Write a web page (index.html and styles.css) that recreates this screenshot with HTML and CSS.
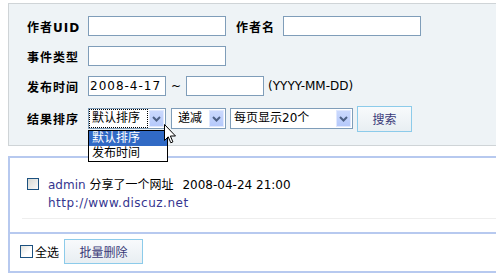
FILE: index.html
```html
<!DOCTYPE html>
<html lang="zh-CN">
<head>
    <meta charset="UTF-8">
    <meta name="viewport" content="width=device-width, initial-scale=1.0">
    <title>事件搜索</title>
    <link rel="stylesheet" href="styles.css">
</head>
<body>

    <!-- 搜索表单 -->
    <div class="search-box">
        <div class="form-row">
            <label class="field-label">作者UID</label>
            <input type="text" class="txt">
            <label class="field-label field-label-inline">作者名</label>
            <input type="text" class="txt">
        </div>
        <div class="form-row">
            <label class="field-label">事件类型</label>
            <input type="text" class="txt">
        </div>
        <div class="form-row">
            <label class="field-label">发布时间</label>
            <input type="text" class="txt txt-date txt-filled" value="2008-4-17">
            <span class="tilde">~</span>
            <input type="text" class="txt txt-date">
            <span class="hint">(YYYY-MM-DD)</span>
        </div>
        <div class="form-row form-row-last">
            <label class="field-label">结果排序</label>

            <div class="combo combo-order">
                <span class="combo-text combo-text-focus">默认排序</span>
                <span class="combo-arrow">
                    <svg width="9" height="6" viewBox="0 0 9 6"><path d="M1 1 L4.5 4.5 L8 1" fill="none" stroke="#4d6185" stroke-width="2"/></svg>
                </span>
                <ul class="combo-list">
                    <li class="active">默认排序</li>
                    <li>发布时间</li>
                </ul>
                <svg class="cursor" width="12" height="20" viewBox="0 0 12 20">
                    <path d="M0.5 0.5 V16.5 L4.2 12.8 L6.8 18.8 L8.9 17.9 L6.4 12 H11.5 Z" fill="#fff" stroke="#000"/>
                </svg>
            </div>

            <div class="combo combo-dir">
                <span class="combo-text">递减</span>
                <span class="combo-arrow">
                    <svg width="9" height="6" viewBox="0 0 9 6"><path d="M1 1 L4.5 4.5 L8 1" fill="none" stroke="#4d6185" stroke-width="2"/></svg>
                </span>
            </div>

            <div class="combo combo-perpage">
                <span class="combo-text">每页显示20个</span>
                <span class="combo-arrow">
                    <svg width="9" height="6" viewBox="0 0 9 6"><path d="M1 1 L4.5 4.5 L8 1" fill="none" stroke="#4d6185" stroke-width="2"/></svg>
                </span>
            </div>

            <button class="btn">搜索</button>
        </div>
    </div>

    <!-- 动态列表 -->
    <div class="feed-box">
        <div class="feed-list">
            <div class="feed-item">
                <span class="check"></span>
                <div class="feed-body">
                    <div><a href="#">admin</a> 分享了一个网址<span class="feed-time">2008-04-24 21:00</span></div>
                    <div><a href="#" class="feed-url">http://www.discuz.net</a></div>
                </div>
            </div>
        </div>
        <div class="feed-foot">
            <span class="check check-lg"></span>
            <span class="select-all">全选</span>
            <button class="btn btn-wide">批量删除</button>
        </div>
    </div>

</body>
</html>
```

FILE: styles.css
```css
/* Umum */
* {
    margin: 0;
    padding: 0;
    box-sizing: border-box;
}

html, body {
    overflow: hidden;
}

body {
    margin: 3px 0 0 8px;
    background: #fff;
    color: #000;
    font: 12px "DejaVu Sans", "Noto Sans CJK SC", sans-serif;
}

/* Search box */
.search-box {
    margin-right: -30px;
    padding: 7px 0 9px 18px;
    background: #eef3f6;
    border: 1px solid #cfd4d7;
    border-right: 0;
}

.form-row {
    display: flex;
    align-items: center;
    height: 30px;
}

.form-row-last {
    height: 35px;
}

.field-label {
    width: 61px;
    font-weight: bold;
    letter-spacing: 1px;
    white-space: nowrap;
}

.field-label-inline {
    width: auto;
    margin: 0 8px 0 10px;
}

.txt {
    width: 138px;
    height: 20px;
    padding: 0 1px;
    border: 1px solid #7f9db9;
    background: #fff;
    font: 12px "DejaVu Sans", sans-serif;
    color: #000;
    outline: none;
}

.txt-date {
    width: 78px;
}

.txt-filled {
    letter-spacing: 1px;
}

.tilde {
    margin: 0 5px;
}

.hint {
    margin-left: 4px;
}

/* Combo (select) */
.combo {
    position: relative;
    display: flex;
    align-items: center;
    height: 21px;
    margin-right: 4px;
    border: 1px solid #7f9db9;
    background: #fff;
    white-space: nowrap;
}

.combo-order {
    width: 78px;
    margin-right: 5px;
}

.combo-dir {
    width: 55px;
}

.combo-perpage {
    width: 123px;
}

.combo-text {
    flex: 1;
    padding-left: 3px;
    line-height: 17px;
}

.combo-dir .combo-text {
    padding-left: 6px;
}

.combo-text-focus {
    height: 19px;
    margin-right: 1px;
    padding-left: 2px;
    border: 1px dotted #000;
}

.combo-arrow {
    display: flex;
    align-items: center;
    justify-content: center;
    width: 15px;
    height: 17px;
    margin-right: 1px;
    background: linear-gradient(#cbd9fd, #b5c9fb);
    border: 1px solid #e0e8fe;
}

.combo-list {
    position: absolute;
    top: 21px;
    left: -1px;
    width: 80px;
    list-style: none;
    background: #fff;
    border: 1px solid #000;
}

.combo-list li {
    height: 15px;
    line-height: 15px;
    padding-left: 3px;
}

.combo-list .active {
    background: #316ac5;
    color: #fff;
}

.cursor {
    position: absolute;
    left: 75px;
    top: 15px;
}

/* Button */
.btn {
    width: 55px;
    height: 26px;
    border: 1px solid #8ccbea;
    background: linear-gradient(#f8fafc, #e8eef2);
    color: #3a3a78;
    font: 12px "Noto Sans CJK SC", sans-serif;
    cursor: pointer;
}

.btn-wide {
    width: 79px;
    height: 25px;
    margin-left: 5px;
}

/* Feed box */
.feed-box {
    margin: 10px -30px 0 0;
    border: 2px solid #b7c9ef;
    border-right: 0;
}

.feed-list {
    padding-bottom: 13px;
}

.feed-item {
    display: flex;
    align-items: flex-start;
    margin-left: 12px;
    padding: 18px 0 6px 5px;
    border-bottom: 1px solid #eeeeee;
    line-height: 18px;
}

.check {
    flex-shrink: 0;
    width: 12px;
    height: 12px;
    margin-top: 2px;
    border: 1px solid #1c5180;
    background: linear-gradient(135deg, #d8d8d2, #fafafa);
}

.feed-body {
    margin-left: 9px;
}

.feed-body a {
    color: #35358f;
    text-decoration: none;
}

.feed-url {
    letter-spacing: 0.5px;
}

.feed-time {
    margin-left: 9px;
}

.feed-foot {
    display: flex;
    align-items: center;
    padding: 5px 0 7px 10px;
    border-top: 2px solid #b7c9ef;
}

.check-lg {
    width: 13px;
    height: 13px;
    margin: 0 2px 0 0;
    background: linear-gradient(135deg, #e2e2dc, #fff 60%);
}
```
